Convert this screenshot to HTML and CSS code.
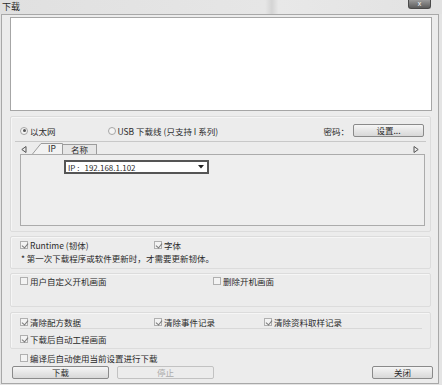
FILE: index.html
```html
<!DOCTYPE html>
<html lang="zh">
<head>
    <meta charset="UTF-8">
    <title>下载</title>
    <link rel="stylesheet" href="styles.css">
</head>
<body>
    <div class="titlebar">
        <span class="title">下载</span>
        <span class="close">x</span>
    </div>
    <div class="client">
        <div class="log"></div>

        <div class="group conn">
            <div class="radio-row">
                <label class="opt"><span class="radio on"></span>以太网</label>
                <label class="opt usb"><span class="radio"></span>USB 下载线 (只支持 I 系列)</label>
                <span class="pwd">密码：</span>
                <button class="btn set">设置...</button>
            </div>
            <div class="sep"></div>
            <div class="tabs">
                <span class="arrow">
                    <svg width="6" height="7" viewBox="0 0 6 7"><path d="M5 0.5 L0.8 3.5 L5 6.5 Z" fill="none" stroke="#555" stroke-width="1"/></svg>
                </span>
                <span class="tab active">
                    <svg class="tab-shape" width="31" height="11" viewBox="0 0 31 11"><path d="M0.5 11 L9 0.5 L30.5 0.5 L30.5 11" fill="#f2f2f2" stroke="#9c9c9c"/></svg>
                    <span class="tab-label">IP</span>
                </span>
                <span class="tab">名称</span>
                <span class="spacer"></span>
                <span class="arrow right">
                    <svg width="6" height="7" viewBox="0 0 6 7"><path d="M1 0.5 L5.2 3.5 L1 6.5 Z" fill="none" stroke="#555" stroke-width="1"/></svg>
                </span>
            </div>
            <div class="panel">
                <div class="combo">
                    <span class="combo-key">IP :</span>
                    <span class="combo-val">192.168.1.102</span>
                    <svg width="6" height="4" viewBox="0 0 6 4"><path d="M0 0 L6 0 L3 3.5 Z" fill="#222"/></svg>
                </div>
            </div>
        </div>

        <div class="group runtime">
            <div class="row">
                <label class="opt col-a"><span class="check on"></span>Runtime (韧体)</label>
                <label class="opt"><span class="check on"></span>字体</label>
            </div>
            <div class="note">* 第一次下载程序或软件更新时，才需要更新韧体。</div>
        </div>

        <div class="group boot">
            <div class="row">
                <label class="opt col-b"><span class="check"></span>用户自定义开机画面</label>
                <label class="opt"><span class="check"></span>删除开机画面</label>
            </div>
        </div>

        <div class="group clear">
            <div class="row line">
                <label class="opt col-c"><span class="check on"></span>清除配方数据</label>
                <label class="opt col-d"><span class="check on"></span>清除事件记录</label>
                <label class="opt"><span class="check on"></span>清除资料取样记录</label>
            </div>
            <div class="row">
                <label class="opt"><span class="check on"></span>下载后自动工程画面</label>
            </div>
        </div>

        <div class="row compile">
            <label class="opt"><span class="check"></span>编译后自动使用当前设置进行下载</label>
        </div>

        <div class="actions">
            <button class="btn wide">下载</button>
            <button class="btn wide disabled">停止</button>
            <span class="spacer"></span>
            <button class="btn close-btn">关闭</button>
        </div>
    </div>
</body>
</html>
```

FILE: styles.css
```css
* {
    box-sizing: border-box;
}
html, body {
    margin: 0;
}
body {
    width: 442px;
    height: 385px;
    overflow: hidden;
    background: #e4e4e4;
    font-family: "Noto Sans CJK SC", "Liberation Sans", sans-serif;
    font-size: 8.5px;
    color: #2a2a2a;
}
.titlebar {
    height: 14px;
    display: flex;
    justify-content: space-between;
    align-items: flex-start;
    padding-left: 2px;
    background: linear-gradient(90deg, #e0e0e0 0%, #e6e6e6 60%, #d4d4d4 61.5%, #e8e8e8 63%, #e2e2e2 100%);
}
.title {
    font-size: 9px;
    line-height: 14px;
}
.close {
    width: 23px;
    height: 9px;
    margin-right: 11px;
    background: linear-gradient(#9a9a9a, #5c5c5c);
    border: 1px solid #4a4a4a;
    border-top: none;
    border-radius: 0 0 3px 3px;
    color: #fff;
    font-family: "Liberation Sans", sans-serif;
    font-size: 7px;
    line-height: 7px;
    text-align: center;
}
.client {
    margin: 0 3px 1px 1px;
    height: 370px;
    border: 1px solid #a8a8a8;
    background: #ececec;
    padding: 1px 0 0 8px;
}
.log {
    width: 422px;
    height: 94px;
    margin-top: 1px;
    background: #fff;
    border: 1px solid #a6a6a6;
}
.group {
    width: 421px;
    margin-top: 4px;
    border: 1px solid #dcdcdc;
    border-radius: 2px;
    box-shadow: inset 1px 1px 0 #f6f6f6;
}
.conn {
    margin-top: 5px;
    height: 116px;
    padding: 7px 6px 0 9px;
}
.radio-row {
    display: flex;
    align-items: center;
    height: 13px;
}
.opt {
    display: flex;
    align-items: center;
    gap: 2px;
    white-space: nowrap;
}
.usb {
    margin-left: 52px;
}
.radio {
    width: 8px;
    height: 8px;
    border-radius: 50%;
    border: 1px solid #a6a6a6;
    background: #f4f4f4;
    position: relative;
}
.radio.on::after {
    content: "";
    position: absolute;
    left: 1.5px;
    top: 1.5px;
    width: 3px;
    height: 3px;
    border-radius: 50%;
    background: #555;
}
.pwd {
    margin-left: auto;
    margin-right: 4px;
}
.btn {
    font-family: inherit;
    font-size: 8.5px;
    color: #2a2a2a;
    height: 13px;
    padding: 0;
    border: 1px solid #8a8a8a;
    border-radius: 2px;
    background: linear-gradient(#f6f6f6, #e6e6e6 50%, #d8d8d8);
    line-height: 11px;
}
.set {
    width: 71px;
}
.sep {
    height: 1px;
    margin: 4px -2px 0 -5px;
    background: #c8c8c8;
}
.tabs {
    display: flex;
    align-items: flex-end;
    height: 12px;
    padding-top: 1px;
}
.arrow {
    width: 12px;
    height: 10px;
    display: flex;
    align-items: center;
    padding-left: 1px;
}
.tab {
    height: 10px;
    padding: 0 8px;
    border: 1px solid #9c9c9c;
    border-bottom: none;
    border-left: none;
    background: #e6e6e6;
    line-height: 9px;
    position: relative;
}
.tab.active {
    width: 31px;
    height: 11px;
    padding: 0;
    border: none;
    background: none;
}
.tab-shape {
    position: absolute;
    left: 0;
    top: 0;
}
.tab-label {
    position: relative;
    display: block;
    text-align: center;
    padding-left: 9px;
    line-height: 11px;
}
.spacer {
    flex: 1;
}
.panel {
    width: 405px;
    height: 72px;
    border: 1px solid #ababab;
    background: #eeeeee;
    padding: 5px 0 0 43px;
}
.combo {
    width: 145px;
    height: 14px;
    border: 2px solid #555;
    background: #fff;
    display: flex;
    align-items: center;
    padding: 0 3px 0 2px;
    font-size: 8px;
}
.combo-key {
    margin-right: 5px;
}
.combo-val {
    flex: 1;
}
.row {
    display: flex;
    align-items: center;
    height: 13px;
}
.check {
    width: 8px;
    height: 8px;
    border: 1px solid #b0b0b0;
    background: #f3f3f3;
    position: relative;
}
.check.on::after {
    content: "";
    position: absolute;
    left: 1.5px;
    top: 0;
    width: 3px;
    height: 5px;
    border: solid #7a7a7a;
    border-width: 0 1px 1px 0;
    transform: rotate(40deg);
}
.runtime {
    height: 33px;
    padding: 1px 0 0 9px;
}
.col-a {
    width: 134px;
}
.note {
    padding-left: 1px;
    line-height: 14px;
}
.boot {
    height: 34px;
    padding: 0 0 0 9px;
}
.col-b {
    width: 193px;
}
.clear {
    margin-top: 5px;
    height: 37px;
    padding: 3px 0 0 9px;
}
.line {
    margin-right: 8px;
    border-bottom: 1px solid #d8d8d8;
    height: 13px;
    margin-bottom: 3px;
}
.col-c {
    width: 134px;
}
.col-d {
    width: 110px;
}
.compile {
    margin-top: 2px;
    padding-left: 10px;
}
.actions {
    display: flex;
    align-items: center;
    width: 423px;
    margin-top: 2px;
    padding-left: 2px;
    gap: 8px;
}
.wide {
    width: 97px;
}
.disabled {
    color: #ababab;
    border-color: #c2c2c2;
    background: #ececec;
}
.close-btn {
    width: 61px;
}
```
